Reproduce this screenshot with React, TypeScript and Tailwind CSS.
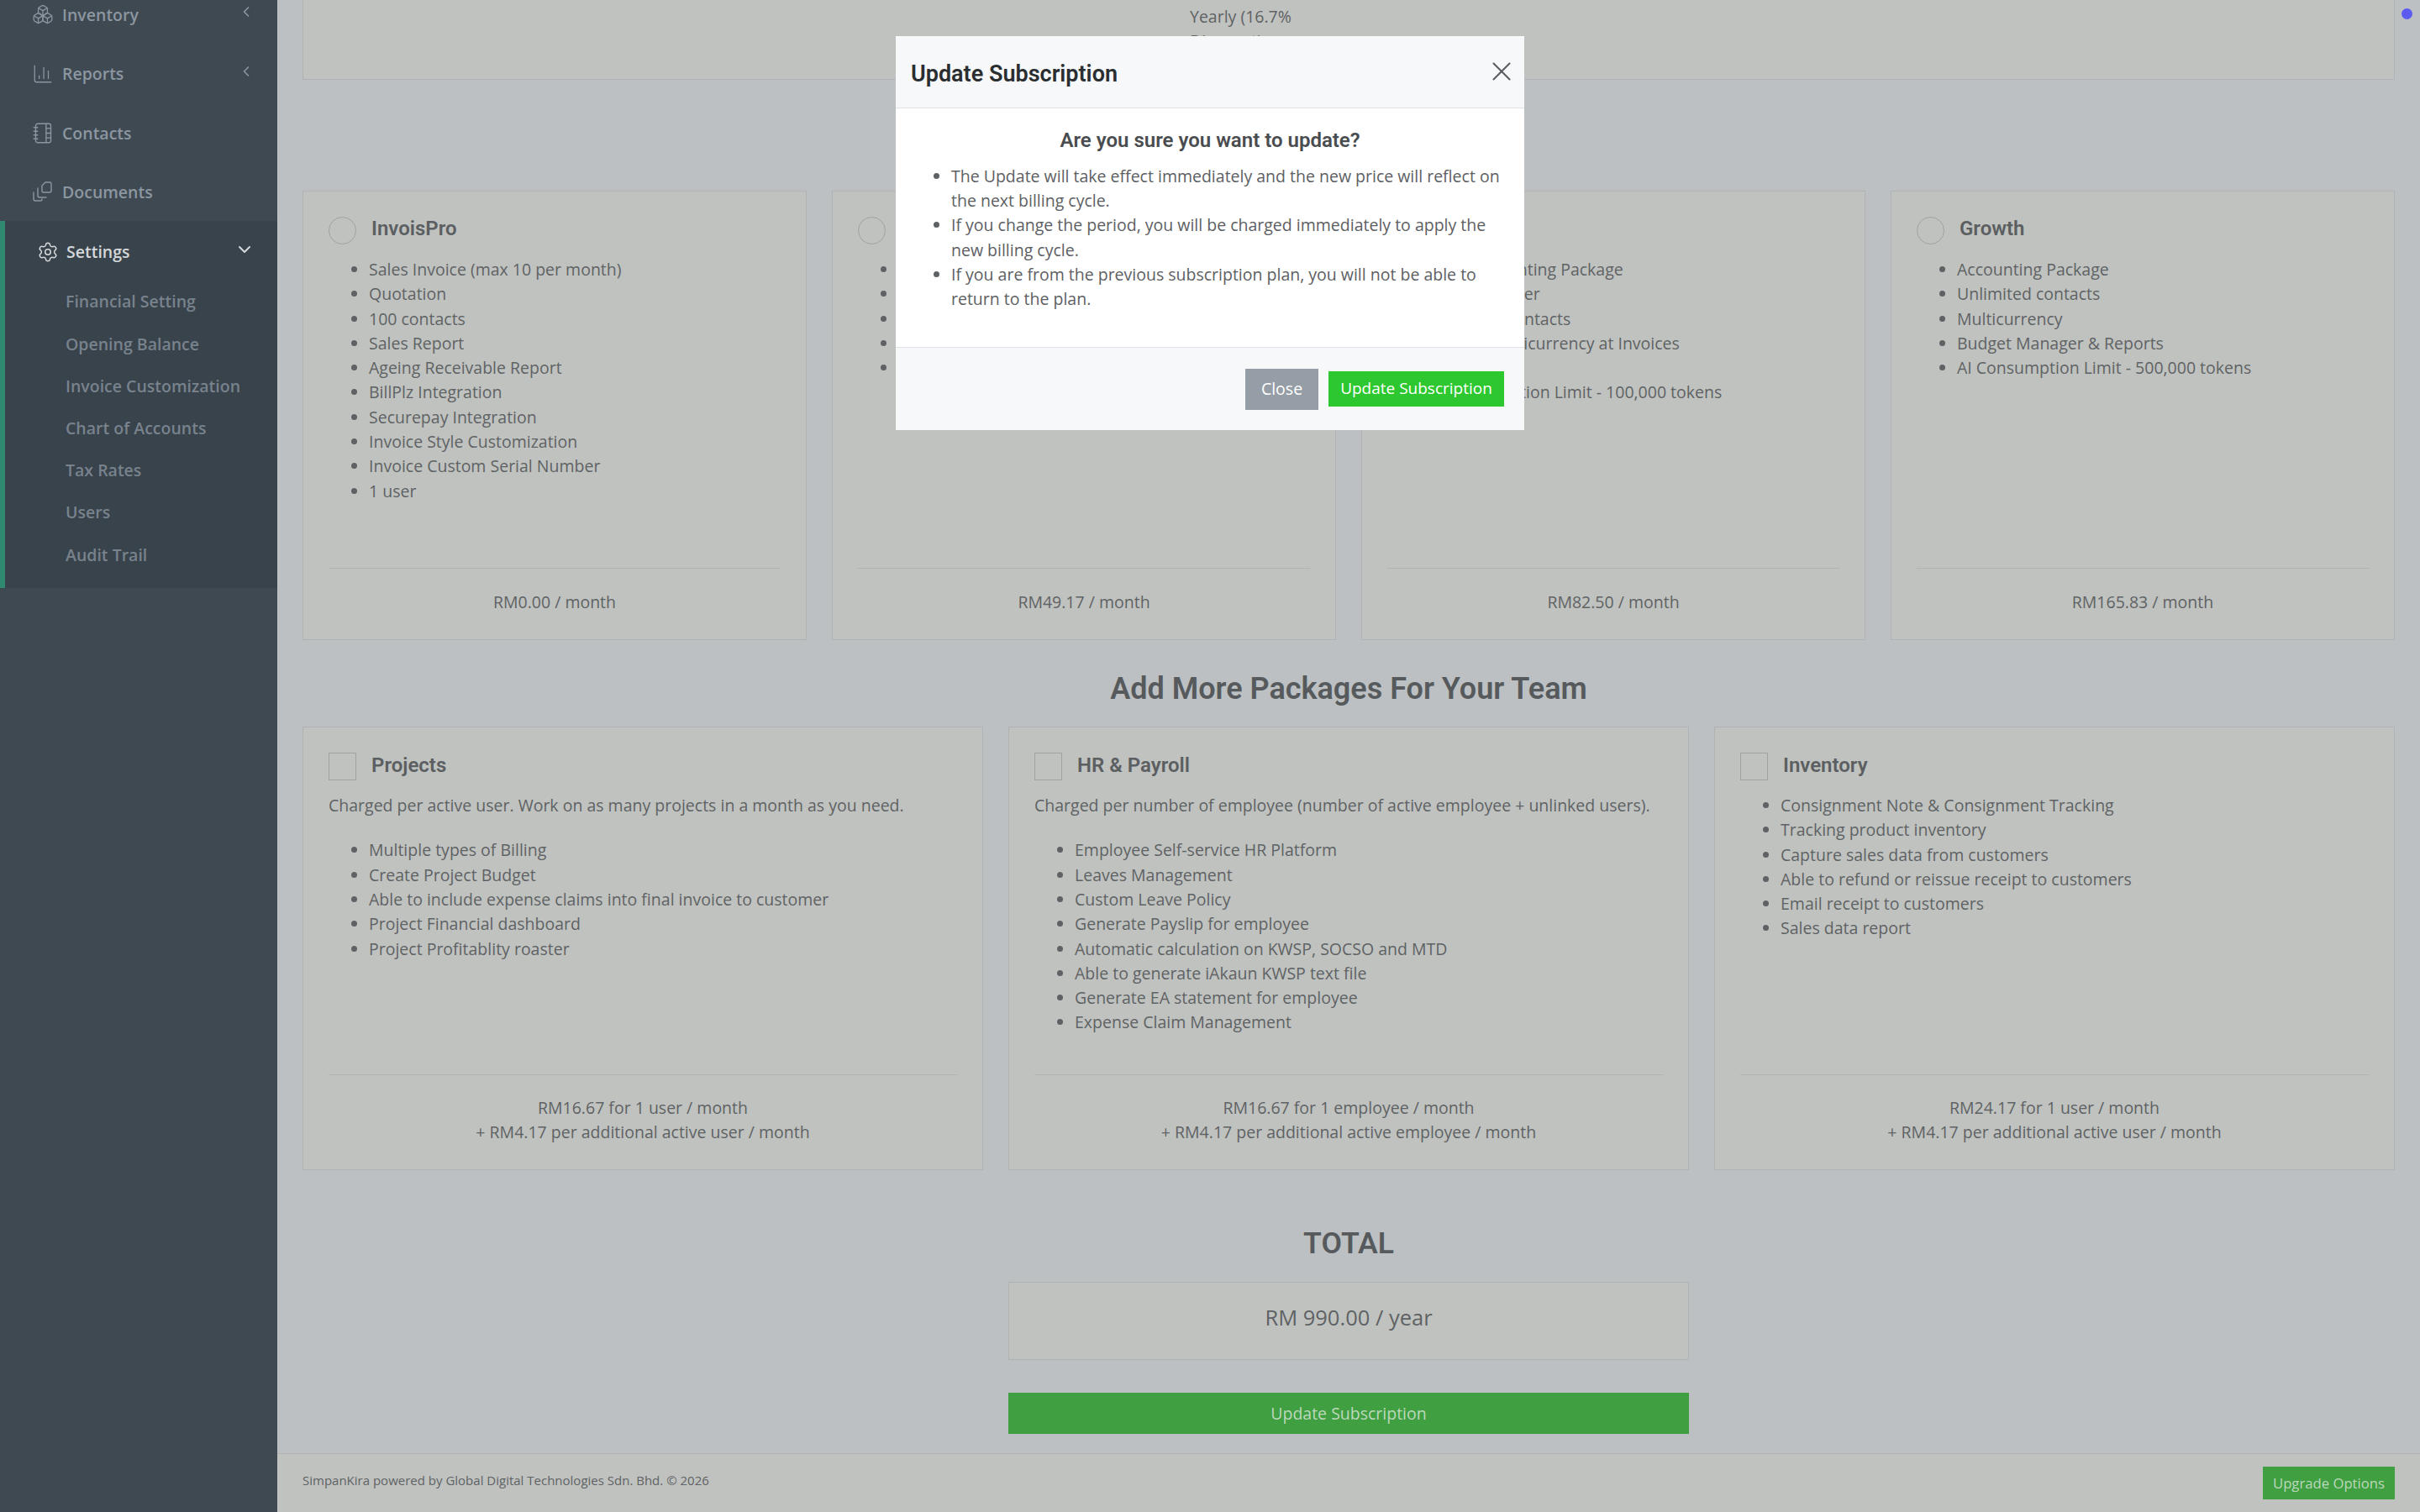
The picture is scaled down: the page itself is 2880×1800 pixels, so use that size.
import { Boxes, ChartColumn, ChevronDown, ChevronLeft, NotebookTabs, Settings, X } from "lucide-react";

const sans = "font-['Open_Sans',sans-serif]";
const heading = "font-['Roboto',sans-serif]";

const settingsLinks = [
  "Financial Setting",
  "Opening Balance",
  "Invoice Customization",
  "Chart of Accounts",
  "Tax Rates",
  "Users",
  "Audit Trail",
];

const blank = "\u00a0";

const plans = [
  {
    name: "InvoisPro",
    price: "RM0.00 / month",
    items: [
      "Sales Invoice (max 10 per month)",
      "Quotation",
      "100 contacts",
      "Sales Report",
      "Ageing Receivable Report",
      "BillPlz Integration",
      "Securepay Integration",
      "Invoice Style Customization",
      "Invoice Custom Serial Number",
      "1 user",
    ],
  },
  {
    name: blank,
    price: "RM49.17 / month",
    items: [blank, blank, blank, blank, blank],
  },
  {
    name: blank,
    price: "RM82.50 / month",
    items: [
      "Basic Accounting Package",
      "Up to 100 user",
      "Unlimited contacts",
      "Limited Multicurrency at Invoices",
      blank,
      "AI Consumption Limit - 100,000 tokens",
    ],
  },
  {
    name: "Growth",
    price: "RM165.83 / month",
    items: [
      "Accounting Package",
      "Unlimited contacts",
      "Multicurrency",
      "Budget Manager & Reports",
      "AI Consumption Limit - 500,000 tokens",
    ],
  },
];

const addons = [
  {
    name: "Projects",
    desc: "Charged per active user. Work on as many projects in a month as you need.",
    items: [
      "Multiple types of Billing",
      "Create Project Budget",
      "Able to include expense claims into final invoice to customer",
      "Project Financial dashboard",
      "Project Profitablity roaster",
    ],
    price: ["RM16.67 for 1 user / month", "+ RM4.17 per additional active user / month"],
  },
  {
    name: "HR & Payroll",
    desc: "Charged per number of employee (number of active employee + unlinked users).",
    items: [
      "Employee Self-service HR Platform",
      "Leaves Management",
      "Custom Leave Policy",
      "Generate Payslip for employee",
      "Automatic calculation on KWSP, SOCSO and MTD",
      "Able to generate iAkaun KWSP text file",
      "Generate EA statement for employee",
      "Expense Claim Management",
    ],
    price: ["RM16.67 for 1 employee / month", "+ RM4.17 per additional active employee / month"],
  },
  {
    name: "Inventory",
    desc: "",
    items: [
      "Consignment Note & Consignment Tracking",
      "Tracking product inventory",
      "Capture sales data from customers",
      "Able to refund or reissue receipt to customers",
      "Email receipt to customers",
      "Sales data report",
    ],
    price: ["RM24.17 for 1 user / month", "+ RM4.17 per additional active user / month"],
  },
];

const notices = [
  "The Update will take effect immediately and the new price will reflect on the next billing cycle.",
  "If you change the period, you will be charged immediately to apply the new billing cycle.",
  "If you are from the previous subscription plan, you will not be able to return to the plan.",
];

function DocumentsIcon() {
  return (
    <svg width="24" height="25" viewBox="0 0 24 25" fill="none" stroke="currentColor" strokeWidth="1.4" strokeLinecap="round" strokeLinejoin="round">
      <path d="M12 5l4-4h5a2 2 0 0 1 2 2v8a2 2 0 0 1-2 2h-7a2 2 0 0 1-2-2z" />
      <path d="M7 8v9a2 2 0 0 0 2 2h8" />
      <path d="M2 13v8a2 2 0 0 0 2 2h6a2 2 0 0 0 2-2" />
    </svg>
  );
}

function NavItem({ icon, label, chevron }: { icon: React.ReactNode; label: string; chevron?: boolean }) {
  return (
    <div className="flex h-[70.5px] items-center pl-[38px] pr-[27px] text-[#8c96a0]">
      <span className="flex w-[36px] items-center">{icon}</span>
      <span className="font-semibold">{label}</span>
      {chevron && <ChevronLeft size={20} strokeWidth={2} className="ml-auto -mt-[6px]" />}
    </div>
  );
}

function FeatureList({ items, className }: { items: string[]; className?: string }) {
  return (
    <ul className={`list-disc pl-[48px] marker:text-[#5f6264] ${className ?? ""}`}>
      {items.map((item, i) => (
        <li key={i} className="h-[29.3px]">
          {item}
        </li>
      ))}
    </ul>
  );
}

function Sidebar() {
  return (
    <aside className="h-full w-[330px] shrink-0 overflow-hidden bg-[#3e4952]">
      <div className="-mt-[18px]">
        <NavItem icon={<Boxes size={26} strokeWidth={1.2} />} label="Inventory" chevron />
        <NavItem icon={<ChartColumn size={26} strokeWidth={1.2} />} label="Reports" chevron />
        <NavItem icon={<NotebookTabs size={27} strokeWidth={1.2} />} label="Contacts" />
        <NavItem icon={<DocumentsIcon />} label="Documents" />
      </div>
      <div className="mt-[-1px] h-[437px] border-l-[6px] border-[#2f8a70] bg-[#39434b]">
        <div className="flex h-[72px] items-center pl-[38px] pr-[27px] pt-[2px] text-[#d5d8da]">
          <span className="flex w-[35px] items-center">
            <Settings size={26} strokeWidth={1.4} />
          </span>
          <span className="font-semibold">Settings</span>
          <ChevronDown size={24} strokeWidth={2} className="ml-auto -mt-[6px]" />
        </div>
        <div className="-mt-[1px] pl-[72px]">
          {settingsLinks.map((link) => (
            <div key={link} className="flex h-[50.2px] items-center font-semibold text-[#78828d]">
              {link}
            </div>
          ))}
        </div>
      </div>
    </aside>
  );
}

function PlanCard({ plan }: { plan: (typeof plans)[number] }) {
  return (
    <div className="flex h-[535px] flex-col border border-[#b0b3b5] bg-[#c0c2c0] px-[30px]">
      <div className="mt-[30px] flex h-[33px] items-center">
        <span className="h-[33px] w-[33px] shrink-0 rounded-full border-[1.5px] border-[#a0a2a1]" />
        <span className={`${heading} -mt-[3px] ml-[18px] text-[24px] font-semibold text-[#5c5f61]`}>{plan.name}</span>
      </div>
      <FeatureList items={plan.items} className="mt-[15px]" />
      <div className="mt-auto flex h-[85px] items-center justify-center border-t border-[#b0b3b5] pb-[4px] text-[#5f6264]">
        {plan.price}
      </div>
    </div>
  );
}

function AddonCard({ addon }: { addon: (typeof addons)[number] }) {
  return (
    <div className="flex h-[528px] flex-col border border-[#b0b3b5] bg-[#c0c2c0] px-[30px]">
      <div className="mt-[30px] flex h-[33px] items-center">
        <span className="h-[33px] w-[33px] shrink-0 border-[1.5px] border-[#a0a2a1]" />
        <span className={`${heading} -mt-[2px] ml-[18px] text-[24px] font-semibold text-[#5c5f61]`}>{addon.name}</span>
      </div>
      {addon.desc && <p className="mt-[15px]">{addon.desc}</p>}
      <FeatureList items={addon.items} className={addon.desc ? "mt-[24px]" : "mt-[15px]"} />
      <div className="mt-auto h-[113px] border-t border-[#b0b3b5] pt-[24px] text-center text-[#5f6264]">
        {addon.price.map((line) => (
          <div key={line}>{line}</div>
        ))}
      </div>
    </div>
  );
}

function UpdateModal() {
  return (
    <div className="fixed inset-0 flex items-start justify-center pt-[43px]">
      <div className="w-[748px] bg-white">
        <div className="flex h-[86px] items-center justify-between border-b border-[#dfe2e6] bg-[#f6f8fa] pl-[18px] pr-[8px]">
          <h5 className={`${heading} mt-[6px] text-[27px] font-semibold text-[#2b2e31]`}>Update Subscription</h5>
          <X size={38} strokeWidth={1.3} className="-mt-[2px] text-[#5a5e62]" />
        </div>
        <div className="h-[284px] pt-[20px] text-[#5d6063]">
          <h4 className={`${heading} text-center text-[24px] font-semibold leading-[36px] text-[#4a4d50]`}>
            Are you sure you want to update?
          </h4>
          <ul className="mt-[10px] list-disc pl-[66px] pr-[20px] marker:text-[#5f6264]">
            {notices.map((n) => (
              <li key={n} className="leading-[29.2px]">
                {n}
              </li>
            ))}
          </ul>
        </div>
        <div className="flex h-[99px] items-center justify-end gap-[12px] border-t border-[#dfe2e6] bg-[#f6f8fa] pr-[24px]">
          <button className="h-[49px] w-[87px] bg-[#959da6] text-white">Close</button>
          <button className="h-[42px] w-[209px] bg-[#2dc82f] text-[19px] text-white">Update Subscription</button>
        </div>
      </div>
    </div>
  );
}

export default function App() {
  return (
    <div className={`${sans} flex h-screen overflow-hidden bg-[#bcc0c3] text-[19.5px] leading-[29.4px] text-[#5f6264]`}>
      <Sidebar />
      <main className="flex h-full min-w-0 flex-1 flex-col">
        <div className="flex-1 overflow-hidden px-[30px]">
          <div className="h-[95px] border-x border-b border-[#b0b3b5] bg-[#c0c2c0] pl-[1055px]">
            <div className="h-[95px] w-[150px] overflow-hidden pt-[5px]">Yearly (16.7% Discount)</div>
          </div>
          <div className="mt-[132px] grid grid-cols-4 gap-[30px]">
            {plans.map((plan, i) => (
              <PlanCard key={i} plan={plan} />
            ))}
          </div>
          <h2 className={`${heading} flex h-[103px] items-center justify-center pt-[14px] text-[36px] font-semibold text-[#565a5c]`}>
            Add More Packages For Your Team
          </h2>
          <div className="grid grid-cols-3 gap-[30px]">
            {addons.map((addon) => (
              <AddonCard key={addon.name} addon={addon} />
            ))}
          </div>
          <div className="mx-auto w-[810px]">
            <div className={`${heading} mt-[65px] h-[44px] text-center text-[35.5px] font-semibold leading-[44px] text-[#565a5c]`}>TOTAL</div>
            <div className="mt-[24px] flex h-[93px] items-center justify-center border border-[#b0b3b5] bg-[#c0c2c0] pb-[8px] text-[25.5px] text-[#5f6264]">
              RM 990.00 / year
            </div>
            <button className="mt-[39px] h-[49px] w-full bg-[#3f9f41] text-[#bcd8bc]">Update Subscription</button>
          </div>
        </div>
        <footer className="flex h-[70px] shrink-0 items-center justify-between border-t border-[#b0b3b5] bg-[#c0c2c0] px-[30px]">
          <span className="-mt-[6px] text-[15px] text-[#5f6264]">SimpanKira powered by Global Digital Technologies Sdn. Bhd. © 2026</span>
          <button className="h-[39px] w-[157px] bg-[#3f9f41] text-[16.7px] text-[#bcd8bc]">Upgrade Options</button>
        </footer>
      </main>
      <span className="fixed right-[9px] top-[10px] h-[13px] w-[13px] rounded-full bg-[#5b5bf0]" />
      <UpdateModal />
    </div>
  );
}
